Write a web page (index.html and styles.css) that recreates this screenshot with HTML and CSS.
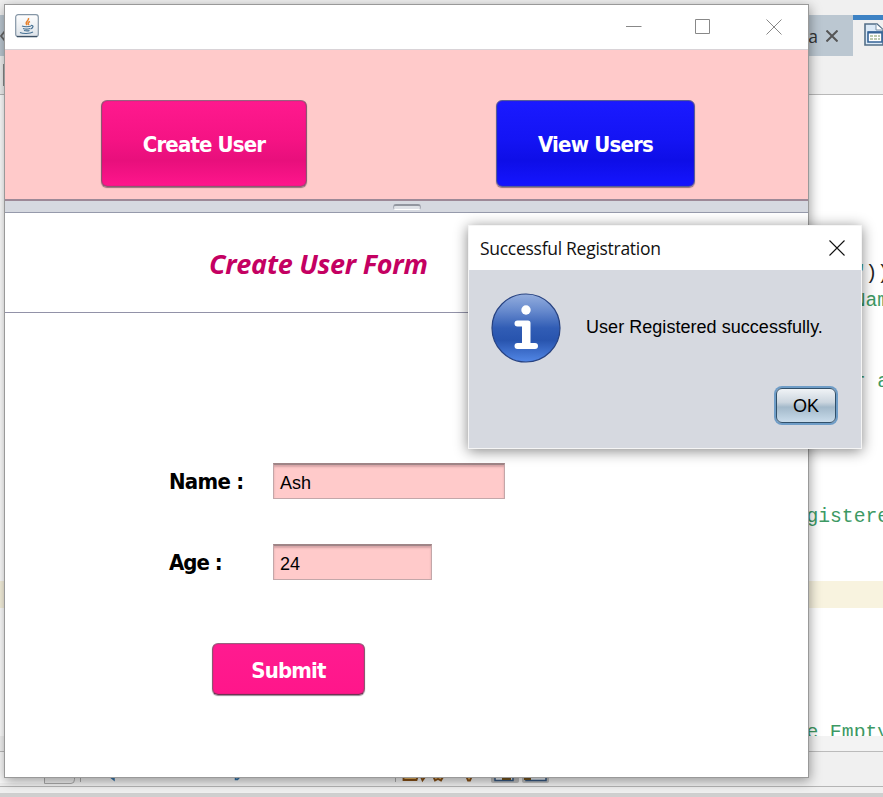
FILE: index.html
```html
<!DOCTYPE html>
<html lang="en">
<head>
<meta charset="utf-8">
<title>Create User</title>
<link rel="stylesheet" href="styles.css">
</head>
<body>
<div class="ide">
  <div class="ide-top"></div>
  <div class="tabs">
    <div class="tab tab-left"><svg width="6" height="12" viewBox="0 0 6 12"><path d="M5 1 1 6l4 5" fill="none" stroke="#666" stroke-width="2"/></svg></div>
    <div class="tab tab-file"><span>ra</span><svg width="12" height="12" viewBox="0 0 12 12"><path d="m.5.500 11 11M11.500.500l-11 11" stroke="#555" stroke-width="2"/></svg></div>
    <div class="tab tab-active"><svg width="20" height="23" viewBox="0 0 20 23"><path d="M1 1h12l6 6v15H1z" fill="#dceaf7" stroke="#536f88" stroke-width="1.6"/><path d="M12 1v6h7" fill="#fff" stroke="#7892aa"/><path d="M4 9h14v10H4z" fill="#fff" stroke="#356396" stroke-width="1.6"/><path d="M4 9.500h14" stroke="#356396" stroke-width="2"/><path d="M6 13h10M6 16h10" stroke="#7c9861" stroke-width="1.2" stroke-dasharray="3 1"/></svg></div>
  </div>
  <div class="ide-tools"><i></i></div>
  <div class="code">
    <div class="row"></div><div class="row"></div><div class="row"></div><div class="row"></div><div class="row"></div><div class="row"></div>
    <div class="row">    "<b>)</b><b>)</b></div>
    <div class="row">    Name</div>
    <div class="row"></div><div class="row"></div>
    <div class="row">    r a</div>
    <div class="row"></div><div class="row"></div><div class="row"></div><div class="row"></div>
    <div class="row">gistere</div>
    <div class="row"></div><div class="row"></div>
    <div class="row current"></div>
    <div class="row"></div><div class="row"></div><div class="row"></div><div class="row"></div>
    <div class="row">e Empty</div>
  </div>
  <div class="ide-scroll"></div>
  <div class="find-bar">
    <svg width="883" height="35" viewBox="0 752 883 35">
      <path d="M0 752h44v31H0z" fill="#fafafa"/>
      <path d="M44.500 770v13.500H71q3.500 0 3.500-4V770M80.500 770v12M395.500 770v12" fill="none" stroke="#aaa"/>
      <path d="m109 776 5 4v-4M235.500 776v3.500h2l3-3.500" fill="#91bbdd" stroke="#3271a6" stroke-width="1.500"/>
      <path d="M403.500 777v3h13l1-3M421 777l1.500 3.500 2.500-3.500M433.500 777l1.500 3.500 3-1.500 3 1.500 2-3.500M466.500 777l1.500 3.500h2l1.500-3.500" fill="#e6b461" stroke="#865017" stroke-width="1.800"/>
      <path d="M491 774h28v7q0 2-3 2h-22q-3 0-3-2zM522 774h27v7q0 2-3 2h-21q-3 0-3-2z" fill="#bdbdbd"/>
      <path d="M495 773v7.500h18V773M526 773v7.500h20V773" fill="#e9eef3" stroke="#365982" stroke-width="1.500"/>
      <path d="M502 778.500h9M524 778.500h7" stroke="#74531d" stroke-width="3"/>
    </svg>
  </div>
  <div class="status"></div>
  <div class="ide-bottom"></div>
</div>

<main class="window">
  <header class="titlebar">
    <svg class="java" width="24" height="24" viewBox="0 0 24 24">
      <defs><linearGradient id="jv" x2="0" y2="1"><stop stop-color="#fff"/><stop offset="1" stop-color="#dce2e8"/></linearGradient></defs>
      <rect x=".7" y=".7" width="22.600" height="22" rx="2.500" fill="url(#jv)" stroke="#8596a6" stroke-width="1.200"/>
      <path d="M2 22.500h20" stroke="#3d5064" stroke-width="1.300"/>
      <path d="M13.500 4c1 3-4.500 3.500-1.500 7M15 7.500c-2 .7-2.500 2-1 3.500" fill="none" stroke="#e8832f" stroke-width="1.500"/>
      <path d="M7 12c2 1 7 1 9 0M8 14.500c2 .8 5 .8 7 0M9 16.500c2 .6 4 .6 5.500 0M16 11.500c3-.5 2.500 2.500-.5 3.500M5 18.500c3 1.500 10 1.300 13-.5" fill="none" stroke="#487294" stroke-width="1.200"/>
    </svg>
    <svg class="controls" width="156" height="16" viewBox="0 0 156 16" fill="none" stroke="#888">
      <path d="M0 7.500h15.500"/><path d="M69.500.500h14v14h-14z"/><path d="m140.500.500 15 15M155.500.500l-15 15"/>
    </svg>
  </header>
  <nav class="menu">
    <button class="btn create">Create User</button>
    <button class="btn view">View Users</button>
  </nav>
  <div class="divider"><i></i></div>
  <section class="heading"><h1>Create User Form</h1></section>
  <form class="form">
    <label class="field"><span class="f-name">Name :</span><span class="input wide">Ash</span></label>
    <label class="field"><span class="f-age">Age :</span><span class="input">24</span></label>
    <button type="button" class="btn submit">Submit</button>
  </form>
</main>

<aside class="dialog">
  <header class="dialog-title"><span>Successful Registration</span><svg width="16" height="16" viewBox="0 0 16 16"><path d="m.5.500 15 15M15.500.500l-15 15" stroke="#111" stroke-width="1.100"/></svg></header>
  <div class="message">
    <svg width="70" height="70" viewBox="0 0 70 70">
      <defs><linearGradient id="info" x2="0" y2="1"><stop stop-color="#94aede"/><stop offset=".25" stop-color="#6689cd"/><stop offset=".5" stop-color="#315db5"/><stop offset=".68" stop-color="#2854ae"/><stop offset="1" stop-color="#5287e6"/></linearGradient></defs>
      <circle cx="35" cy="35" r="34" fill="url(#info)" stroke="#274281" stroke-width="1.200"/>
      <circle cx="35" cy="17" r="4.700" fill="#fff"/>
      <path d="M26.500 27.500H37q2.500 0 2.500 2.500v20H44q3 0 3 3t-3 3H26.500q-3 0-3-3t3-3H31V33.500h-4.500q-3 0-3-3t3-3z" fill="#fff"/>
    </svg>
    <p>User Registered successfully.</p>
  </div>
  <div class="actions"><button class="ok">OK</button></div>
</aside>
</body>
</html>
```
FILE: styles.css
```css
* { box-sizing: border-box; }
body { margin: 0; width: 883px; height: 797px; overflow: hidden; position: relative; background: #fff; font-family: "Liberation Sans", sans-serif; }
svg { display: block; flex: none; }
button { padding: 0; margin: 0; }

.ide { display: flex; flex-direction: column; width: 883px; height: 797px; overflow: hidden; background: #f0f0f0; }
.ide-top { height: 15px; background: #f0f0f0; }
.tabs { display: flex; height: 41px; }
.tab { display: flex; align-items: center; background: #bbc7d1; }
.tab-left { width: 8px; }
.tab-file { width: 845px; justify-content: flex-end; gap: 8px; padding-right: 15px; font: 17.5px "Open Sans", sans-serif; color: #333; }
.tab-active { width: 30px; background: #f0f0f0; border-top: 5px solid #3d82c4; padding: 0 0 7px 11px; }
.ide-tools { height: 39px; border-bottom: 1px solid #b8b8b8; padding-top: 8px; }
.ide-tools i { display: block; width: 4px; height: 22px; border-right: 1px solid #888; }
.code { height: 641px; overflow: hidden; background: #fff; }
.row { height: 27px; padding-left: 806.4px; font: 19.7px/35px "Liberation Mono", monospace; color: #3d9964; white-space: pre; overflow: hidden; }
.row b { color: #222; font-weight: 400; }
.row.current { background: #f8f3df; }
.ide-scroll { height: 16px; background: #f3f3f3; border-bottom: 1px solid #bbb; }
.find-bar { height: 35px; border-bottom: 1px solid #b5b5b5; overflow: hidden; }
.status { height: 6px; background: #f0f0f0; }
.ide-bottom { height: 4px; background: #cfcfcf; }

.window { position: absolute; left: 4px; top: 4px; width: 805px; height: 774px; display: flex; flex-direction: column; border: 1px solid #999; background: #fff; box-shadow: 1px 3px 11px rgba(0,0,0,.38); }
.titlebar { height: 45px; display: flex; justify-content: space-between; padding: 9px 26px 0 10px; border-bottom: 1px solid #d9d3d7; }
.controls { margin-top: 5px; }
.menu { height: 149px; background: #ffcaca; display: flex; padding: 50px 0 0 96px; gap: 189px; }
.btn { display: block; border: 1px solid #8d5871; border-top-color: #99617f; border-radius: 6px; padding-top: 3px; color: #fff; font: bold 22px/1 "DejaVu Sans Condensed", "DejaVu Sans", sans-serif; font-stretch: condensed; box-shadow: 0 1px 1px rgba(65,40,60,.55), inset 0 0 1px #713654; }
.create { width: 206px; height: 87px; background: linear-gradient(#ff198e, #f51384 45%, #e80f7c 70%, #ff158c); letter-spacing: -.85px; }
.view { width: 199px; height: 87px; background: linear-gradient(#1a1aff, #1414f4 45%, #0e0ee7 70%, #1515ff); border-color: #555d9a; letter-spacing: -.8px; }
.divider { height: 14px; border-top: 2px solid #9d8997; border-bottom: 1px solid #969aab; background: #d6d9e0; display: flex; justify-content: center; padding-top: 3px; }
.divider i { width: 28px; height: 6px; border: 1px solid #a7abb4; border-top: 2px solid #92969f; border-bottom-color: #fff; border-radius: 3px; background: #dfe2e7; }
.heading { height: 100px; border-bottom: 1px solid #9292a8; padding: 32px 0 0 204px; }
h1 { margin: 0; font: italic bold 27px/37px "Open Sans", sans-serif; letter-spacing: -.27px; color: #c40062; white-space: nowrap; }
.form { padding: 150px 0 0 164px; }
.field { display: flex; align-items: center; height: 36px; margin-bottom: 45px; }
.field > span:first-child { width: 104px; padding-top: 2px; font: bold 22px/30px "DejaVu Sans Condensed", "DejaVu Sans", sans-serif; font-stretch: condensed; letter-spacing: -.7px; white-space: nowrap; }
.field > .f-age { letter-spacing: -1px !important; }
.input { width: 159px; height: 36px; background: #ffcaca; border: 1px solid #c3a7a9; border-top: 2px solid #9f8587; box-shadow: inset 0 2px 2px rgba(120,80,85,.3); padding: 2px 0 0 6px; font-size: 18px; line-height: 32px; }
.wide { width: 232px; }
.submit { width: 153px; height: 52px; margin: 63px 0 0 43px; background: linear-gradient(#ff1b90, #ff168a); letter-spacing: -.85px; border-bottom-color: #713153; }

.dialog { position: absolute; left: 468px; top: 225px; width: 394px; height: 224px; border: 1px solid #f5f5f5; background: #d6d9e0; box-shadow: 0 2px 13px rgba(0,0,0,.48); }
.dialog-title { height: 44px; background: #fff; display: flex; align-items: center; justify-content: space-between; padding: 0 16px 0 11px; font: 17.5px "Open Sans", sans-serif; letter-spacing: -.28px; color: #111; }
.message { display: flex; height: 93px; padding: 23px 0 0 22px; gap: 25px; }
.message p { margin: 24px 0 0; font-size: 18px; line-height: 21px; letter-spacing: .04px; white-space: nowrap; }
.actions { display: flex; justify-content: flex-end; padding: 25px 25px 0 0; }
.ok { width: 60px; height: 35px; border: 1px solid #31506a; border-radius: 6px; padding-top: 2px; background: linear-gradient(#f0f3f6, #ccd6df 40%, #a3b9ca 55%, #c9dceb); box-shadow: 0 0 0 2px #6f9dc7; font: 18px "Liberation Sans", sans-serif; color: #000; }
```
